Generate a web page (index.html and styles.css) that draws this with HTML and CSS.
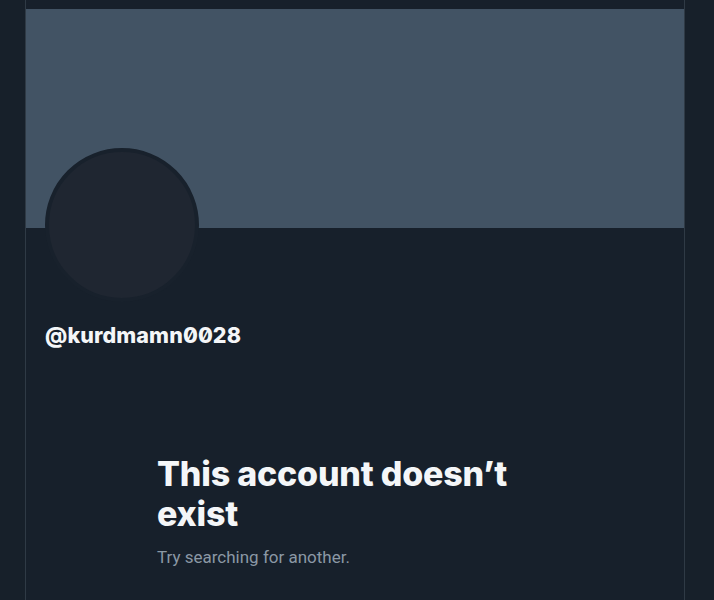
FILE: index.html
```html
<!DOCTYPE html>
<html>
<head>
<meta charset="utf-8">
<link rel="stylesheet" href="styles.css">
</head>
<body>
<div class="column">
  <div class="banner"></div>
  <div class="profile">
    <div class="avatar"></div>
    <div class="handle">@kurdmamn0028</div>
  </div>
  <div class="empty">
    <h1 class="title">This account doesn’t exist</h1>
    <p class="sub">Try searching for another.</p>
  </div>
</div>
</body>
</html>
```

FILE: styles.css
```css
html, body {
  margin: 0;
  padding: 0;
  background: #17202a;
  height: 100%;
}
body {
  font-family: Inter, "Noto Sans", sans-serif;
  overflow: hidden;
}
.column {
  margin-left: 25px;
  width: 658px;
  min-height: 600px;
  border-left: 1px solid #2f3a45;
  border-right: 1px solid #2f3a45;
  padding-top: 9px;
  background: #17202b;
}
.banner {
  height: 219px;
  background: #425364;
}
.profile {
  padding-left: 19px;
}
.avatar {
  width: 146px;
  height: 146px;
  margin-top: -80px;
  border-radius: 50%;
  background: #1f2631;
  border: 4px solid #18212c;
}
.handle {
  margin-top: 20px;
  color: #f4f6f8;
  font-weight: 800;
  font-size: 21.5px;
  font-feature-settings: "zero" 1;
  letter-spacing: 0.1px;
}
.empty {
  margin-top: 106px;
  padding-left: 131px;
  width: 400px;
}
.title {
  margin: 0;
  color: #f4f6f8;
  font-size: 34px;
  line-height: 40px;
  font-weight: 800;
  letter-spacing: -0.2px;
}
.sub {
  margin: 13px 0 0;
  color: #8b98a5;
  font-size: 17px;
  line-height: 20px;
  font-family: Roboto, sans-serif;
}
```
